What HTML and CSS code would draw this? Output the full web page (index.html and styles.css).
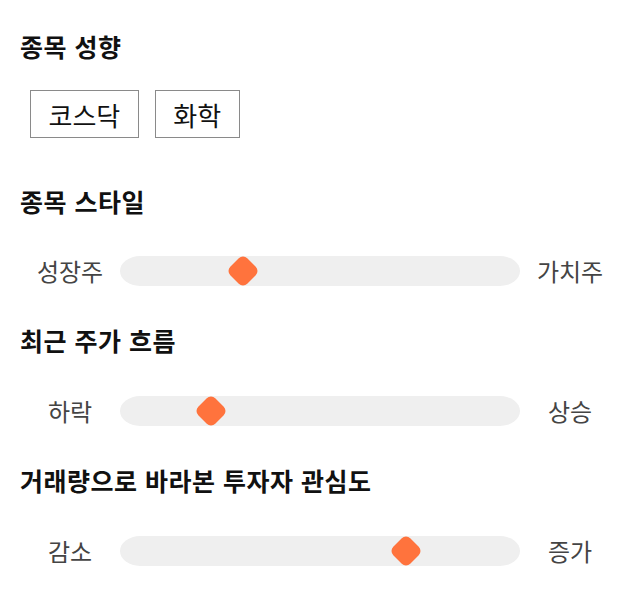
FILE: index.html
```html
<!DOCTYPE html>
<html lang="ko">
<head>
<meta charset="utf-8">
<link rel="stylesheet" href="styles.css">
</head>
<body>
<div class="page">
  <section class="group">
    <h2 class="title">종목 성향</h2>
    <div class="tags">
      <span class="tag">코스닥</span>
      <span class="tag">화학</span>
    </div>
  </section>

  <section class="group group-style">
    <h2 class="title">종목 스타일</h2>
    <div class="slider slider-first">
      <span class="label">성장주</span>
      <div class="track"><span class="thumb" style="left: 30.8%"></span></div>
      <span class="label">가치주</span>
    </div>
  </section>

  <section class="group group-slider">
    <h2 class="title">최근 주가 흐름</h2>
    <div class="slider">
      <span class="label">하락</span>
      <div class="track"><span class="thumb" style="left: 22.8%"></span></div>
      <span class="label">상승</span>
    </div>
  </section>

  <section class="group group-slider">
    <h2 class="title">거래량으로 바라본 투자자 관심도</h2>
    <div class="slider">
      <span class="label">감소</span>
      <div class="track"><span class="thumb" style="left: 71.4%"></span></div>
      <span class="label">증가</span>
    </div>
  </section>
</div>
</body>
</html>
```

FILE: styles.css
```css
* { box-sizing: border-box; }

html, body {
  margin: 0;
  padding: 0;
  background: #ffffff;
}

body {
  font-family: "Noto Sans CJK KR", "Noto Sans", sans-serif;
  color: #111111;
}

.page {
  width: 640px;
  padding: 31px 20px 0 20px;
}

.group {
  display: flex;
  flex-direction: column;
}

.title {
  margin: 0;
  font-size: 25px;
  line-height: 30px;
  letter-spacing: 0.5px;
  font-weight: 700;
  color: #111111;
}

.tags {
  display: flex;
  gap: 16px;
  margin-top: 29px;
  padding-left: 10px;
}

.tag {
  display: inline-flex;
  align-items: center;
  height: 48px;
  padding: 0 17.5px;
  border: 1px solid #8a8a8a;
  font-size: 26px;
  color: #111111;
}

.group-style {
  margin-top: 48px;
}

.group-slider {
  margin-top: 39px;
}

.slider {
  display: grid;
  grid-template-columns: 100px 1fr 100px;
  align-items: center;
  margin-top: 41px;
}

.slider-first {
  margin-top: 40px;
}

.label {
  text-align: center;
  font-size: 24px;
  line-height: 30px;
  color: #444444;
}

.track {
  position: relative;
  height: 30px;
  background: #efefef;
  border-radius: 20px / 15px;
}

.thumb {
  position: absolute;
  top: 50%;
  width: 24px;
  height: 24px;
  background: #ff733d;
  border-radius: 6px;
  transform: translate(-50%, -50%) rotate(45deg);
}
```
